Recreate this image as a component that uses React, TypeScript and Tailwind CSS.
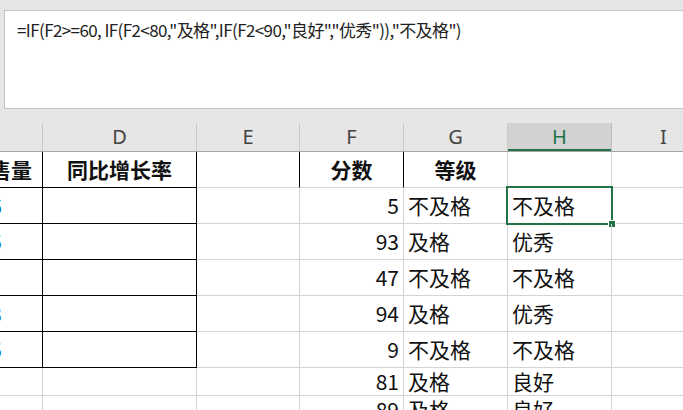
import React from 'react'

const cols = [
  { key: 'C', w: 'w-[150px]' },
  { key: 'D', w: 'w-[154px]' },
  { key: 'E', w: 'w-[103px]' },
  { key: 'F', w: 'w-[104px]' },
  { key: 'G', w: 'w-[104px]' },
  { key: 'H', w: 'w-[104px]' },
  { key: 'I', w: 'w-[104px]' },
]

const scores: [number, string, string][] = [
  [5, '不及格', '不及格'],
  [93, '及格', '优秀'],
  [47, '不及格', '不及格'],
  [94, '及格', '优秀'],
  [9, '不及格', '不及格'],
  [81, '及格', '良好'],
  [89, '及格', '良好'],
]

// slivers of the blue numbers from column C that peek in at the left edge
const cValues = ['6', '5', '', '3', '5', '', '']

const grid = 'border-r border-b border-[#d4d4d4]'
const boxed = 'border-r border-b border-black'

export default function App() {
  return (
    <div className="w-[683px] h-[410px] overflow-hidden bg-[#e6e6e6] font-['Noto_Sans_CJK_SC',sans-serif] text-[#111]">
      {/* Formula bar */}
      <div className="pt-[10px] pl-[4px] pb-[14px]">
        <div className="h-[99px] bg-white border border-r-0 border-[#c3c3c3] pl-[12px] pt-[7px] text-[17px] leading-[24px] tracking-[-0.6px] text-[#222] whitespace-nowrap">
          =IF(F2&gt;=60, IF(F2&lt;80,"及格",IF(F2&lt;90,"良好","优秀")),"不及格")
        </div>
      </div>

      <div className="ml-[-107px] w-[823px]">
        {/* Column headers */}
        <div className="flex h-[29px] border-b border-[#a6a6a6]">
          {cols.map(c => (
            <div
              key={c.key}
              className={`${c.w} shrink-0 flex items-center justify-center border-r text-[20px] font-['Noto_Sans',sans-serif] ${
                c.key === 'H'
                  ? 'bg-[#d2d2d2] border-[#bcbcbc] text-[#217346] shadow-[inset_0_-2px_0_#217346]'
                  : 'border-[#c8c8c8] text-[#444]'
              }`}
            >
              {c.key}
            </div>
          ))}
        </div>

        <div className="bg-white">
          {/* Row 1: titles */}
          <div className="flex h-[36px] text-[21px] font-bold">
            <div className={`w-[150px] shrink-0 flex items-center justify-end pr-[10px] ${boxed}`}>销售量</div>
            <div className={`w-[154px] shrink-0 flex items-center justify-center ${boxed}`}>同比增长率</div>
            <div className="w-[103px] shrink-0 border-r border-r-black border-b border-b-[#d4d4d4]" />
            <div className="w-[104px] shrink-0 flex items-center justify-center border-r border-r-black border-b border-b-[#d4d4d4]">分数</div>
            <div className={`w-[104px] shrink-0 flex items-center justify-center ${grid}`}>等级</div>
            <div className={`w-[104px] shrink-0 ${grid}`} />
            <div className={`w-[104px] shrink-0 ${grid}`} />
          </div>

          {scores.map(([score, g, h], i) => {
            const inTable = i < 5
            const rowH = i < 5 ? 'h-[36px]' : 'h-[28px]'
            return (
              <div key={i} className={`flex ${rowH} text-[21px]`}>
                <div className={`w-[150px] shrink-0 flex items-center justify-end pr-[40px] text-[#0070c0] ${inTable ? boxed : grid}`}>
                  {cValues[i]}
                </div>
                <div className={`w-[154px] shrink-0 ${inTable ? boxed : grid}`} />
                <div className={`w-[103px] shrink-0 ${grid}`} />
                <div className={`w-[104px] shrink-0 flex items-center justify-end pr-[4px] ${grid}`}>{score}</div>
                <div className={`w-[104px] shrink-0 flex items-center pl-[4px] ${grid}`}>{g}</div>
                <div className={`w-[104px] shrink-0 relative flex items-center pl-[4px] ${grid}`}>
                  {h}
                  {i === 0 && (
                    <div className="absolute left-[-2px] top-[-2px] right-[-2px] bottom-[-2px] border-2 border-[#217346]">
                      <div className="absolute right-[-5px] bottom-[-5px] w-[8px] h-[8px] bg-[#217346] border border-white" />
                    </div>
                  )}
                </div>
                <div className={`w-[104px] shrink-0 ${grid}`} />
              </div>
            )
          })}
        </div>
      </div>
    </div>
  )
}
